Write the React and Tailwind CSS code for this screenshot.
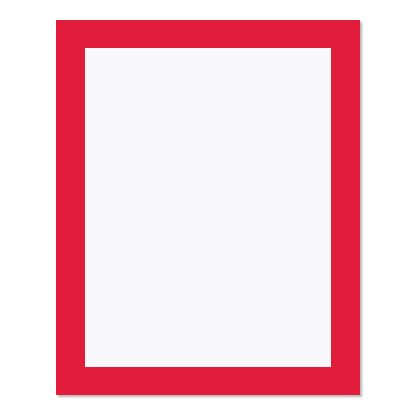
export default function App() {
  return (
    <div className="w-[416px] h-[416px] bg-white flex items-start justify-center pt-[20px]">
      <div className="w-[304px] h-[375px] bg-[#e21d3c] pt-[28px] pl-[29px] pr-[29px] pb-[28px] shadow-[2px_2px_2px_rgba(120,120,130,0.55)]">
        <div className="w-full h-full bg-[#f9f8fb]" />
      </div>
    </div>
  );
}
